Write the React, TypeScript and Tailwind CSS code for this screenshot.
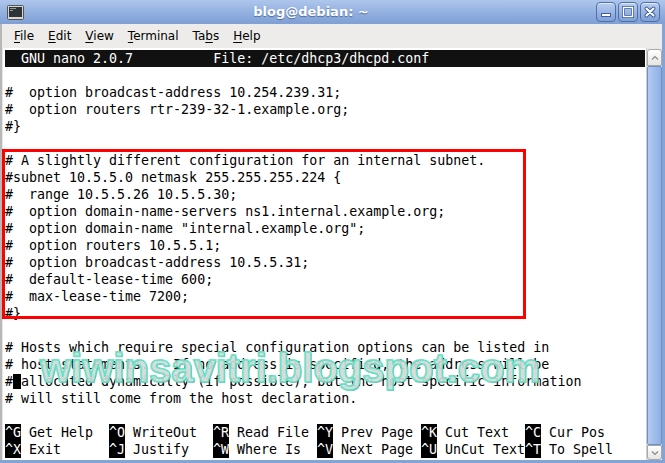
import React from "react";

const rows: string[] = [
  "",
  "#  option broadcast-address 10.254.239.31;",
  "#  option routers rtr-239-32-1.example.org;",
  "#}",
  "",
  "# A slightly different configuration for an internal subnet.",
  "#subnet 10.5.5.0 netmask 255.255.255.224 {",
  "#  range 10.5.5.26 10.5.5.30;",
  "#  option domain-name-servers ns1.internal.example.org;",
  '#  option domain-name "internal.example.org";',
  "#  option routers 10.5.5.1;",
  "#  option broadcast-address 10.5.5.31;",
  "#  default-lease-time 600;",
  "#  max-lease-time 7200;",
  "#}",
  "",
  "# Hosts which require special configuration options can be listed in",
  "# host statements.   If no address is specified, the address will be",
  "CURSOR",
  "# will still come from the host declaration.",
  "",
];

const sc1: [string, string][] = [
  ["^G", "Get Help"],
  ["^O", "WriteOut"],
  ["^R", "Read File"],
  ["^Y", "Prev Page"],
  ["^K", "Cut Text"],
  ["^C", "Cur Pos"],
];
const sc2: [string, string][] = [
  ["^X", "Exit"],
  ["^J", "Justify"],
  ["^W", "Where Is"],
  ["^V", "Next Page"],
  ["^U", "UnCut Text"],
  ["^T", "To Spell"],
];

function Shortcuts({ items }: { items: [string, string][] }) {
  return (
    <div className="flex h-[17px] whitespace-pre">
      {items.map(([k, l], i) => (
        <div key={i} className="flex w-[104px] shrink-0">
          <span className="bg-black text-white">{k}</span>
          <span>{" " + l}</span>
        </div>
      ))}
    </div>
  );
}

function WinButton({ kind }: { kind: "min" | "max" | "close" }) {
  return (
    <div className="w-[20px] h-[20px] rounded-[4px] border border-[#4f6fa8] bg-gradient-to-b from-[#b9cdef] to-[#7f9fd6] flex items-center justify-center shadow-[inset_0_1px_0_rgba(255,255,255,0.6)]">
      <svg width="14" height="14" viewBox="0 0 14 14">
        {kind === "min" && (
          <rect x="2.5" y="8.5" width="9" height="3" fill="#fff" stroke="#3e5f99" strokeWidth="1" />
        )}
        {kind === "max" && (
          <g>
            <rect x="2.5" y="2.5" width="9" height="9" fill="none" stroke="#3e5f99" strokeWidth="3" />
            <rect x="2.5" y="2.5" width="9" height="9" fill="none" stroke="#fff" strokeWidth="1.4" />
          </g>
        )}
        {kind === "close" && (
          <g strokeLinecap="round">
            <path d="M3.5 3.5 L10.5 10.5 M10.5 3.5 L3.5 10.5" stroke="#3e5f99" strokeWidth="4" />
            <path d="M3.5 3.5 L10.5 10.5 M10.5 3.5 L3.5 10.5" stroke="#fff" strokeWidth="2" />
          </g>
        )}
      </svg>
    </div>
  );
}

function MenuItem({ pre, u, post }: { pre: string; u: string; post: string }) {
  return (
    <span className="whitespace-pre">
      {pre}
      <span className="underline underline-offset-2">{u}</span>
      {post}
    </span>
  );
}

export default function App() {
  const mono = { fontFamily: '"DejaVu Sans Mono", monospace' } as React.CSSProperties;
  return (
    <div className="relative w-[665px] h-[463px] overflow-hidden flex flex-col bg-[#84a3d6]" style={{ fontFamily: '"DejaVu Sans", sans-serif' }}>
      {/* Title bar */}
      <div className="h-[24px] shrink-0 flex items-center bg-gradient-to-b from-[#aec6ec] via-[#93b1e0] to-[#7f9fd5]">
        <div className="w-[28px] flex justify-center pl-[2px]">
          <svg width="17" height="15" viewBox="0 0 17 15">
            <rect x="0.5" y="0.5" width="16" height="14" rx="1" fill="#d6d6d6" stroke="#555" />
            <rect x="2" y="2" width="13" height="10" fill="#2e3436" />
            <rect x="3" y="3" width="6" height="1" fill="#9a9a9a" />
            <rect x="3" y="5" width="3" height="1" fill="#9a9a9a" />
          </svg>
        </div>
        <div className="flex-1 text-center text-white font-bold text-[13px] [text-shadow:0_1px_1px_rgba(40,60,110,0.6)]">
          blog@debian: ~
        </div>
        <div className="flex gap-[2px] pr-[5px] pl-[2px]">
          <WinButton kind="min" />
          <WinButton kind="max" />
          <WinButton kind="close" />
        </div>
      </div>

      {/* Menu bar */}
      <div className="h-[24px] shrink-0 flex items-center gap-[14px] pl-[12px] bg-[#edecea] text-[12px] text-black mr-[3px] border-l-[2px] border-[#b8b8b8]">
        <MenuItem pre="" u="F" post="ile" />
        <MenuItem pre="" u="E" post="dit" />
        <MenuItem pre="" u="V" post="iew" />
        <MenuItem pre="" u="T" post="erminal" />
        <MenuItem pre="Ta" u="b" post="s" />
        <MenuItem pre="" u="H" post="elp" />
      </div>

      {/* Body */}
      <div className="flex-1 flex min-h-0 mr-[3px] mb-[3px]">
        <div className="w-[2px] bg-[#b8b8b8]" />
        <div className="w-[1px] bg-[#e6e6e6]" />
        <div className="w-[643px] bg-white pl-[2px] pt-[2px] text-[13.3px] leading-[17px] text-black" style={mono}>
          <div className="w-[640px] h-[17px] bg-[#111] text-white whitespace-pre">
            {"  GNU nano 2.0.7          File: /etc/dhcp3/dhcpd.conf"}
          </div>
          {rows.map((r, i) =>
            r === "CURSOR" ? (
              <div key={i} className="h-[17px] whitespace-pre">
                #<span className="bg-black">{" "}</span>allocated dynamically (if possible), but the host-specific information
              </div>
            ) : (
              <div key={i} className="h-[17px] whitespace-pre">
                {r || " "}
              </div>
            )
          )}
          <Shortcuts items={sc1} />
          <Shortcuts items={sc2} />
        </div>
        {/* Scrollbar */}
        <div className="w-[16px] flex flex-col bg-[#e8e8e8] border-l border-[#cfcfcf]">
          <div className="h-[17px] mt-[1px] bg-gradient-to-b from-white to-[#e4e4e4] border border-[#a9a9a9] rounded-t-[3px] flex items-center justify-center">
            <svg width="8" height="6" viewBox="0 0 8 6">
              <path d="M1 4.5 L4 1.5 L7 4.5" fill="none" stroke="#8a8a8a" strokeWidth="1.2" />
            </svg>
          </div>
          <div className="flex-1 bg-gradient-to-r from-[#b3cbf0] via-[#a0bdec] to-[#8fb0e4] border border-[#6e8fc6] rounded-[2px]" />
          <div className="h-[15px] bg-gradient-to-b from-white to-[#e4e4e4] border border-[#a9a9a9] rounded-b-[3px] flex items-center justify-center">
            <svg width="8" height="6" viewBox="0 0 8 6">
              <path d="M1 1.5 L4 4.5 L7 1.5" fill="none" stroke="#8a8a8a" strokeWidth="1.2" />
            </svg>
          </div>
        </div>
      </div>

      {/* Red annotation rectangle */}
      <div className="absolute left-[2px] top-[149px] w-[524px] h-[170px] border-[3px] border-[#ff0000] pointer-events-none" />

      {/* Watermark */}
      <div
        className="absolute left-[40px] top-[343px] text-[40px] font-bold leading-[50px] whitespace-pre pointer-events-none text-[rgba(255,255,255,0.7)] [-webkit-text-stroke:1.5px_#5fe3c6] [text-shadow:1px_1px_0_rgba(90,90,90,0.6),-1px_-1px_0_rgba(120,120,120,0.35)]"
        style={{ fontFamily: '"Liberation Sans", Arial, sans-serif' }}
      >
        wiwinsavitri.blogspot.com
      </div>
    </div>
  );
}
